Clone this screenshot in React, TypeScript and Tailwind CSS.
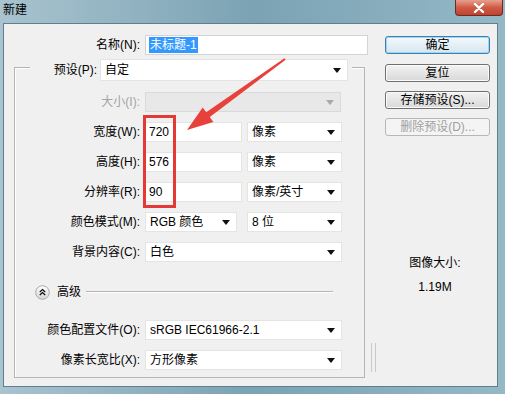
import React from 'react';

const font = { fontFamily: '"Liberation Sans", "Noto Sans CJK SC", sans-serif' };

function Arrow({ disabled }: { disabled?: boolean }) {
  return (
    <svg width="8" height="5" viewBox="0 0 8 5" className="shrink-0">
      <polygon points="0,0 8,0 4,5" fill={disabled ? '#a8a8a8' : '#111'} />
    </svg>
  );
}

function Select({ value, w, disabled }: { value?: string; w: string; disabled?: boolean }) {
  return (
    <div
      className={`${w} h-full flex items-center justify-between pl-[4px] pr-[6px] border ${
        disabled ? 'bg-[#e8e8e8] border-[#dadada]' : 'bg-white border-[#e4e4e4]'
      }`}
    >
      <span className="whitespace-nowrap">{value}</span>
      <Arrow disabled={disabled} />
    </div>
  );
}

function Input({ value, w }: { value: string; w: string }) {
  return (
    <div className={`${w} h-full flex items-center pl-[3px] bg-white border border-[#e4e4e4]`}>
      {value}
    </div>
  );
}

function Row({ label, children, dim, className = '' }: { label: string; children: React.ReactNode; dim?: boolean; className?: string }) {
  return (
    <div className={`flex items-center h-[20px] gap-[5px] ${className}`}>
      <div className={`w-[125px] text-right whitespace-nowrap ${dim ? 'text-[#a3a3a3]' : 'text-black'}`}>{label}</div>
      {children}
    </div>
  );
}

function Button({ label, primary, disabled, className = '' }: { label: string; primary?: boolean; disabled?: boolean; className?: string }) {
  const look = primary
    ? 'border-[#3c7fb1] shadow-[inset_0_0_0_1px_#9fd6f2] bg-gradient-to-b from-[#f3f9fd] to-[#d6e6ef] text-black'
    : disabled
    ? 'border-[#b4b8bb] bg-[#f4f4f4] text-[#a0a0a0]'
    : 'border-[#707070] shadow-[inset_0_0_0_1px_#fbfbfb] bg-gradient-to-b from-[#f2f2f2] to-[#d9d9d9] text-black';
  return (
    <div className={`w-[105px] h-[18px] rounded-[3px] border flex items-center justify-center ${look} ${className}`}>
      {label}
    </div>
  );
}

export default function App() {
  return (
    <div
      className="relative w-[505px] h-[394px] overflow-hidden flex flex-col text-[12px] leading-[16px] bg-gradient-to-r from-[#a9c3cf] via-[#7ba3b4] to-[#94b8c6]"
      style={font}
    >
      {/* title bar */}
      <div className="h-[23px] flex items-start justify-between">
        <div className="pl-[3px] pt-[2px] text-black">新建</div>
        <div className="mr-[2px] w-[48px] h-[16px] rounded-b-[4px] border border-t-0 border-[#6b2b24] bg-gradient-to-b from-[#e6a08f] via-[#cf5b45] to-[#c0432f] flex items-center justify-center">
          <svg width="12" height="10" viewBox="0 0 12 10">
            <path d="M2 1 L10 9 M10 1 L2 9" stroke="#fff" strokeWidth="2.4" strokeLinecap="round" />
          </svg>
        </div>
      </div>

      {/* client */}
      <div className="flex-1 flex pl-[3px] pr-[7px] pb-[7px]">
        <div className="flex-1 flex bg-[#f0f0f0] border border-[#5f7f8e]">
          {/* left column */}
          <div className="relative w-[372px] pt-[11px] flex flex-col">
            <div className="flex items-center h-[20px] gap-[5px]">
              <div className="w-[136px] text-right">名称(N):</div>
              <div className="w-[223px] h-full flex items-center pl-[3px] bg-white border border-[#d4d4d4]">
                <span className="bg-[#3399ff] text-white px-[1px]">未标题-1</span>
              </div>
            </div>

            {/* group box */}
            <div className="mt-[12px] ml-[10px] w-[351px] h-[311px] border border-[#b5b5b5] shadow-[inset_1px_1px_0_#ffffff] flex flex-col">
              <div className="-mt-[9px] ml-[15px] w-[322px] h-[22px] pr-[4px] bg-[#f0f0f0] flex items-center gap-[3px]">
                <div className="w-[67px] text-right">预设(P):</div>
                <Select value="自定" w="w-[248px]" />
              </div>
              <Row label="大小(I):" dim className="mt-[11px]">
                <Select w="w-[196px]" disabled />
              </Row>
              <Row label="宽度(W):" className="mt-[10px]">
                <Input value="720" w="w-[97px]" />
                <Select value="像素" w="w-[95px]" />
              </Row>
              <Row label="高度(H):" className="mt-[10px]">
                <Input value="576" w="w-[97px]" />
                <Select value="像素" w="w-[95px]" />
              </Row>
              <Row label="分辨率(R):" className="mt-[10px]">
                <Input value="90" w="w-[97px]" />
                <Select value="像素/英寸" w="w-[95px]" />
              </Row>
              <Row label="颜色模式(M):" className="mt-[10px]">
                <Select value="RGB 颜色" w="w-[92px]" />
                <div className="w-0" />
                <Select value="8 位" w="w-[95px]" />
              </Row>
              <Row label="背景内容(C):" className="mt-[10px]">
                <Select value="白色" w="w-[197px]" />
              </Row>

              <div className="mt-[22px] h-[16px] flex items-center pl-[20px] pr-[31px]">
                <svg width="15" height="15" viewBox="0 0 15 15" className="shrink-0">
                  <defs>
                    <linearGradient id="adv" x1="0" y1="0" x2="0" y2="1">
                      <stop offset="0" stopColor="#ffffff" />
                      <stop offset="1" stopColor="#d4d4d4" />
                    </linearGradient>
                  </defs>
                  <circle cx="7.5" cy="7.5" r="6.8" fill="url(#adv)" stroke="#a9a9a9" strokeWidth="1" />
                  <path d="M4.8 7 L7.5 4.6 L10.2 7 M4.8 10 L7.5 7.6 L10.2 10" fill="none" stroke="#111" strokeWidth="1.3" />
                </svg>
                <span className="ml-[7px]">高级</span>
                <div className="ml-[5px] flex-1 h-[2px] border-t border-[#b5b5b5] border-b border-b-white" />
              </div>

              <Row label="颜色配置文件(O):" className="mt-[20px]">
                <Select value="sRGB IEC61966-2.1" w="w-[197px]" />
              </Row>
              <Row label="像素长宽比(X):" className="mt-[10px]">
                <Select value="方形像素" w="w-[197px]" />
              </Row>
            </div>

            {/* splitter grip */}
            <div className="absolute left-[367px] top-[319px] h-[29px] w-[5px] border-x border-[#c9c9c9]" />
          </div>

          {/* right column */}
          <div className="flex-1 pl-[9px] pt-[12px] flex flex-col">
            <Button label="确定" primary />
            <Button label="复位" className="mt-[10px]" />
            <Button label="存储预设(S)..." className="mt-[9px]" />
            <Button label="删除预设(D)..." disabled className="mt-[9px]" />
            <div className="w-[100px] mt-[119px] text-center">图像大小:</div>
            <div className="w-[100px] mt-[8px] text-center">1.19M</div>
          </div>
        </div>
      </div>

      {/* annotation overlay */}
      <div className="absolute left-[143px] top-[115px] w-[33px] h-[93px] border-[3px] border-[#e53935]" />
      <svg className="absolute left-0 top-0 pointer-events-none" width="505" height="394" viewBox="0 0 505 394">
        <polygon
          points="187,130 202.7,107.4 206.2,112.3 284.4,58.2 285.6,59.8 209.8,117.1 213.3,122"
          fill="#e8413c"
        />
      </svg>
    </div>
  );
}
